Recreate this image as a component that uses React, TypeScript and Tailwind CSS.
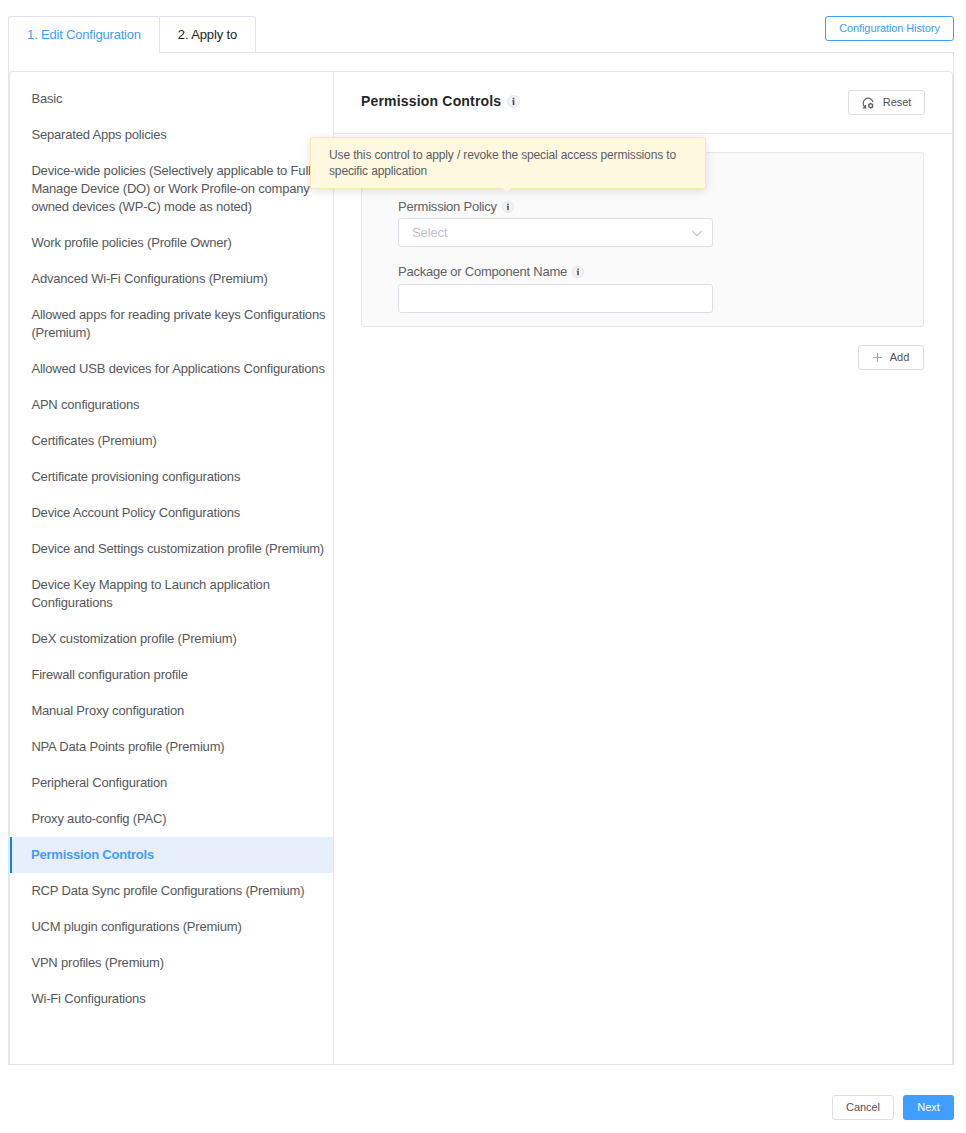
import { clsx } from 'clsx';

const sections = [
  'Basic',
  'Separated Apps policies',
  'Device-wide policies (Selectively applicable to Fully Manage Device (DO) or Work Profile-on company owned devices (WP-C) mode as noted)',
  'Work profile policies (Profile Owner)',
  'Advanced Wi-Fi Configurations (Premium)',
  'Allowed apps for reading private keys Configurations (Premium)',
  'Allowed USB devices for Applications Configurations',
  'APN configurations',
  'Certificates (Premium)',
  'Certificate provisioning configurations',
  'Device Account Policy Configurations',
  'Device and Settings customization profile (Premium)',
  'Device Key Mapping to Launch application Configurations',
  'DeX customization profile (Premium)',
  'Firewall configuration profile',
  'Manual Proxy configuration',
  'NPA Data Points profile (Premium)',
  'Peripheral Configuration',
  'Proxy auto-config (PAC)',
  'Permission Controls',
  'RCP Data Sync profile Configurations (Premium)',
  'UCM plugin configurations (Premium)',
  'VPN profiles (Premium)',
  'Wi-Fi Configurations',
];

const activeSection = 'Permission Controls';

function InfoIcon({ className }: { className: string }) {
  return (
    <svg viewBox="0 0 12 12" className={clsx('shrink-0', className)}>
      <circle cx="6" cy="6" r="5.5" fill="#f1f2f4" stroke="#dcdee2" strokeWidth="0.8" />
      <rect x="5.3" y="2.6" width="1.5" height="1.4" fill="#454952" />
      <path d="M4.8 4.8h2v4.4H5.3V5.7h-.5z" fill="#454952" />
    </svg>
  );
}

function ResetIcon() {
  return (
    <svg viewBox="0 0 12 12" className="w-3 h-3 shrink-0" fill="none" stroke="#606266">
      <path d="M3.4 10.4A5 5 0 1 1 11 5" strokeWidth="1.2" />
      <path d="M0.8 10.8h2.8V8" strokeWidth="1.2" />
      <circle cx="8.7" cy="8.7" r="1.9" strokeWidth="1.4" />
      <path d="M8.7 5.8v1M8.7 10.6v1M6.2 7.3l.9.5M10.3 9.6l.9.5M6.2 10.1l.9-.5M10.3 7.8l.9-.5" strokeWidth="1" />
    </svg>
  );
}

function Sidebar() {
  return (
    <nav className="w-[324px] shrink-0 border-r border-[#e4e7ed] pt-[9px]">
      {sections.map((name) => {
        const active = name === activeSection;
        return (
          <div
            key={name}
            className={clsx(
              'py-[9px] text-[13px] leading-[18px] pr-1',
              active
                ? 'bg-[#e8effc] border-l-2 border-[#0a84e8] pl-[19px] font-bold tracking-[-0.22px] text-[#409eff]'
                : 'pl-[21.4px] tracking-[-0.185px] text-[#55585e]',
            )}
          >
            {name}
          </div>
        );
      })}
    </nav>
  );
}

function PolicyForm() {
  return (
    <div className="relative mt-[18px] ml-[27px] w-[563px] h-[175px] rounded-[3px] border border-[#e6e7eb] bg-[#fafafa] pl-9 pt-[45px]">
      <div className="w-[315px]">
        <div className="flex items-center h-[18px] text-[13px] tracking-[-0.22px] text-[#606266]">
          Permission Policy
          <InfoIcon className="w-3 h-3 ml-[5px]" />
        </div>
        <div className="mt-[2px] h-[29px] rounded-[3px] border border-[#dcdfe6] bg-white flex items-center justify-between pl-[13px] pr-[9px] text-[13px] tracking-[-0.1px] text-[#c0c4cc]">
          Select
          <svg viewBox="0 0 12 12" className="w-3 h-3" fill="none" stroke="#c0c4cc" strokeWidth="1.1">
            <path d="M1.2 3.8 6 8.6l4.8-4.8" />
          </svg>
        </div>
        <div className="mt-4 flex items-center h-[18px] text-[13px] tracking-[-0.23px] text-[#606266]">
          Package or Component Name
          <InfoIcon className="w-3 h-3 ml-[5px]" />
        </div>
        <div className="mt-[3px] h-[29px] rounded-[3px] border border-[#dcdfe6] bg-white" />
      </div>

      {/* Tooltip over the permission policy label */}
      <div className="absolute -left-[52px] -top-4 w-[396px] h-[52px] rounded-[2px] border border-[#f5e8b4] bg-[#fff8e0] shadow-[0_2px_10px_rgba(0,0,0,0.12)] pl-[18px] pt-[9px] text-[12px] leading-4 tracking-[-0.135px] text-[#5c5e63]">
        Use this control to apply / revoke the special access permissions to
        <br />
        specific application
        <svg viewBox="0 0 12 5" className="absolute left-[190px] top-[49px] w-3 h-[5px]">
          <path d="M0 0h12L6 5z" fill="#fff8e0" />
        </svg>
      </div>
    </div>
  );
}

export default function App() {
  return (
    <div className="w-[966px] h-[1133px] bg-white pl-2 pr-3 pt-4 font-['Liberation_Sans',Arial,sans-serif]">
      <div className="flex h-[37px]">
        <div className="w-[151px] shrink-0 rounded-tl-[3px] border-l border-t border-[#e0e4ec] flex items-center justify-center text-[13px] tracking-[-0.19px] text-[#409eff]">
          1. Edit Configuration
        </div>
        <div className="w-[97px] shrink-0 rounded-tr-[3px] border border-[#e0e4ec] flex items-center justify-center text-[13px] tracking-[-0.12px] text-[#222428]">
          2. Apply to
        </div>
        <div className="flex-1 border-b border-[#e0e4ec] flex justify-end items-start">
          <button className="w-[129px] h-[25px] rounded-[3px] border border-[#409eff] text-[11px] tracking-[-0.1px] text-[#409eff]">
            Configuration History
          </button>
        </div>
      </div>

      <div className="h-[1012px] border-x border-b border-[#e2e4ec] pt-[18px]">
        <div className="flex h-full rounded-t-[4px] border-t border-x border-[#e6e7ec]">
          <Sidebar />
          <main className="flex-1">
            <div className="flex items-center justify-between h-[62px] border-b border-[#e4e7ed] pl-[27px] pr-[27px]">
              <h2 className="flex items-center text-[14px] font-bold tracking-[0.18px] text-[#25272c] pb-[3px]">
                Permission Controls
                <InfoIcon className="w-[13px] h-[13px] ml-[6px]" />
              </h2>
              <button className="flex items-center justify-center gap-[9px] w-[77px] h-[25px] rounded-[3px] border border-[#dcdfe6] text-[11px] tracking-[-0.05px] text-[#505359]">
                <ResetIcon />
                Reset
              </button>
            </div>
            <PolicyForm />
            <div className="flex justify-end mt-[18px] pr-7">
              <button className="flex items-center justify-center gap-2 w-[66px] h-[25px] rounded-[3px] border border-[#dcdfe6] text-[11px] text-[#505359]">
                <svg viewBox="0 0 9 9" className="w-[9px] h-[9px]" stroke="#8fa9c2" strokeWidth="1">
                  <path d="M4.5 0v9M0 4.5h9" />
                </svg>
                Add
              </button>
            </div>
          </main>
        </div>
      </div>

      <div className="flex justify-end gap-[9px] mt-[30px]">
        <button className="w-[62px] h-[25px] rounded-[3px] border border-[#dcdfe6] text-[11px] tracking-[-0.05px] text-[#505359]">Cancel</button>
        <button className="w-[51px] h-[25px] rounded-[3px] bg-[#409eff] text-[11px] text-white">Next</button>
      </div>
    </div>
  );
}
